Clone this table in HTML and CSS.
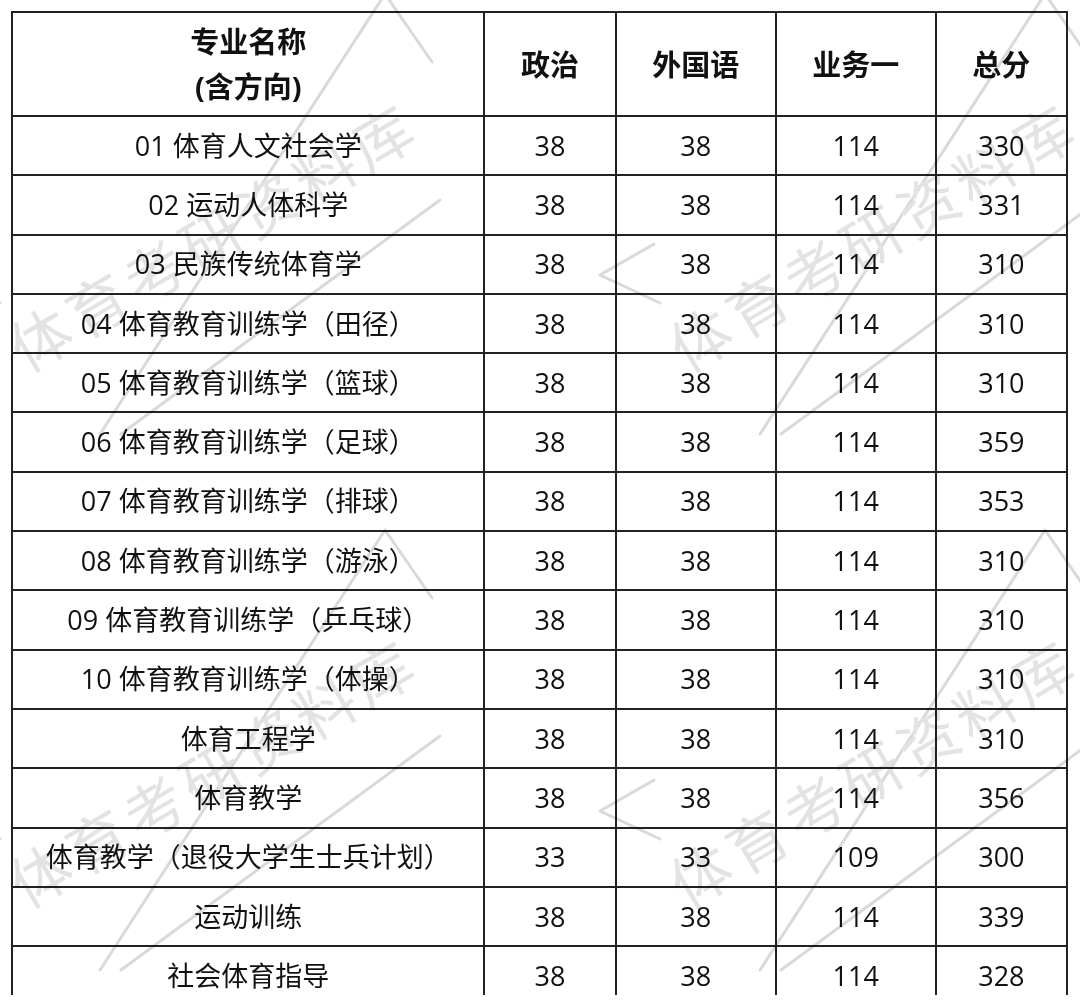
FILE: index.html
```html
<!DOCTYPE html>
<html lang="zh-CN">
<head>
<meta charset="utf-8">
<title>复试分数线</title>
<link rel="stylesheet" href="styles.css">
</head>
<body>
<div class="page">
  <div class="clip">
    <table class="scores">
      <colgroup>
        <col class="c-name">
        <col class="c-num">
        <col class="c-mid">
        <col class="c-mid">
        <col class="c-num">
      </colgroup>
      <thead>
        <tr><th>专业名称<br>(含方向)</th><th>政治</th><th>外国语</th><th>业务一</th><th>总分</th></tr>
      </thead>
      <tbody>
        <tr><td>01 体育人文社会学</td><td>38</td><td>38</td><td>114</td><td>330</td></tr>
        <tr><td>02 运动人体科学</td><td>38</td><td>38</td><td>114</td><td>331</td></tr>
        <tr><td>03 民族传统体育学</td><td>38</td><td>38</td><td>114</td><td>310</td></tr>
        <tr><td>04 体育教育训练学（田径）</td><td>38</td><td>38</td><td>114</td><td>310</td></tr>
        <tr><td>05 体育教育训练学（篮球）</td><td>38</td><td>38</td><td>114</td><td>310</td></tr>
        <tr><td>06 体育教育训练学（足球）</td><td>38</td><td>38</td><td>114</td><td>359</td></tr>
        <tr><td>07 体育教育训练学（排球）</td><td>38</td><td>38</td><td>114</td><td>353</td></tr>
        <tr><td>08 体育教育训练学（游泳）</td><td>38</td><td>38</td><td>114</td><td>310</td></tr>
        <tr><td>09 体育教育训练学（乒乓球）</td><td>38</td><td>38</td><td>114</td><td>310</td></tr>
        <tr><td>10 体育教育训练学（体操）</td><td>38</td><td>38</td><td>114</td><td>310</td></tr>
        <tr><td>体育工程学</td><td>38</td><td>38</td><td>114</td><td>310</td></tr>
        <tr><td>体育教学</td><td>38</td><td>38</td><td>114</td><td>356</td></tr>
        <tr><td>体育教学（退役大学生士兵计划）</td><td>33</td><td>33</td><td>109</td><td>300</td></tr>
        <tr><td>运动训练</td><td>38</td><td>38</td><td>114</td><td>339</td></tr>
        <tr><td>社会体育指导</td><td>38</td><td>38</td><td>114</td><td>328</td></tr>
      </tbody>
    </table>
  </div>
  <svg class="watermark" width="1080" height="1008" viewBox="0 0 1080 1008" aria-hidden="true">
    <defs>
      <g id="wm-tile">
        <polyline class="wm-line" points="760,434 1045,-6 1092,62"/>
        <polyline class="wm-line" points="1100,200 781,434"/>
        <polyline class="wm-line" points="654,244 600,275 660,303"/>
        <text class="wm-text" x="872" y="234" transform="rotate(-30.5 872 234)">体育考研资料库</text>
      </g>
    </defs>
    <use href="#wm-tile"/>
    <use href="#wm-tile" transform="translate(-660 0)"/>
    <use href="#wm-tile" transform="translate(0 536)"/>
    <use href="#wm-tile" transform="translate(-660 536)"/>
  </svg>
</div>
</body>
</html>
```

FILE: styles.css
```css
html, body {
  margin: 0;
  padding: 0;
  background: #ffffff;
}

.page {
  position: relative;
  width: 1080px;
  height: 1008px;
  overflow: hidden;
  background: #ffffff;
}

.clip {
  height: 995px;
  overflow: hidden;
  padding: 11px 0 0 11px;
  box-sizing: border-box;
}

.scores {
  border-collapse: collapse;
  table-layout: fixed;
  width: 1057px;
  font-family: "Open Sans", "Noto Sans CJK SC", sans-serif;
  color: #111111;
}

.c-name { width: 44.78%; }
.c-num { width: 12.44%; }
.c-mid { width: 15.17%; }

.scores th,
.scores td {
  border: 2px solid #222222;
  text-align: center;
  vertical-align: middle;
  padding: 0;
  white-space: nowrap;
}

.scores thead tr {
  height: 104px;
}

.scores th {
  font-size: 29px;
  font-weight: 700;
  line-height: 45px;
}

.scores tbody tr {
  height: 59.3px;
}

.scores td {
  font-size: 27px;
  font-weight: 400;
  line-height: 36px;
}

.watermark {
  position: absolute;
  left: 0;
  top: 0;
  pointer-events: none;
  mix-blend-mode: multiply;
}

.wm-line {
  fill: none;
  stroke: #d9d9d9;
  stroke-width: 3;
  stroke-linecap: round;
  stroke-linejoin: round;
}

.wm-text {
  font-family: "Noto Sans CJK SC", sans-serif;
  font-size: 60px;
  font-weight: 400;
  letter-spacing: 6px;
  fill: #e3e3e3;
  text-anchor: middle;
  dominant-baseline: central;
}
```
